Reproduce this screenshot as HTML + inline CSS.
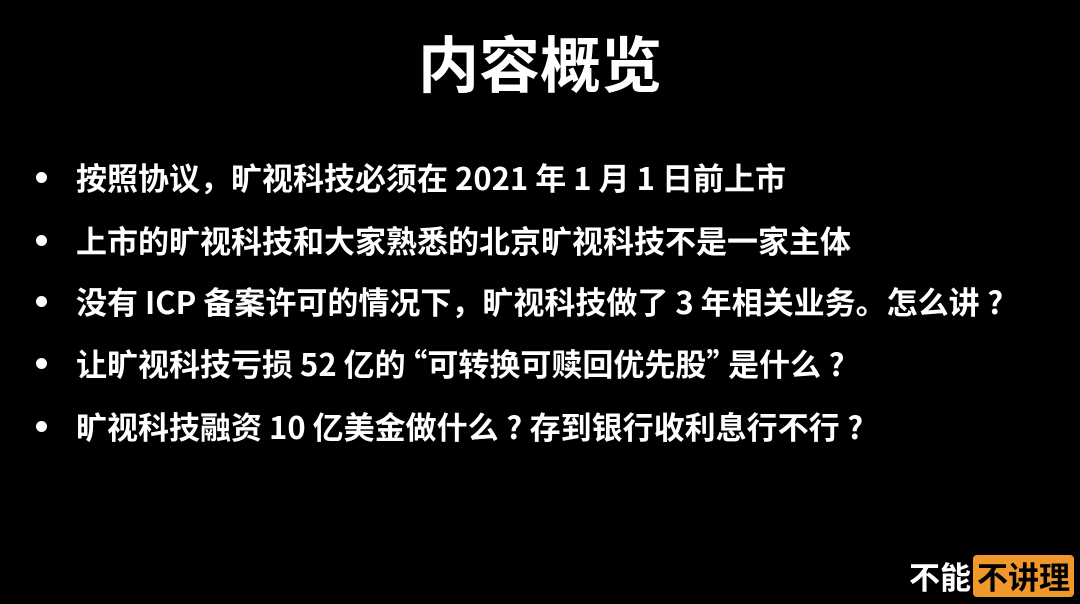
<!DOCTYPE html>
<html lang="zh-CN"><head><meta charset="utf-8"><style>
html,body{margin:0;padding:0;background:#000;}
body{width:1080px;height:604px;position:relative;overflow:hidden;font-family:"Noto Sans CJK SC","Liberation Sans",sans-serif;color:#fff;}
h1{position:absolute;left:0;width:1080px;top:19px;margin:0;text-align:center;font-size:61px;font-weight:bold;line-height:84px;}
.li{position:absolute;left:76px;font-size:31px;font-weight:bold;line-height:40px;white-space:nowrap;}
.li:before{content:"";position:absolute;left:-40px;top:15px;width:11px;height:11px;border-radius:50%;background:#fff;}
.q{display:inline-block;width:1em;text-align:center;}
.lq{margin-left:-0.3em;}
.rq{margin-right:-0.3em;}
.logo{position:absolute;left:909px;top:554px;font-size:31px;font-weight:bold;line-height:44px;white-space:nowrap;}
.logo span{display:inline-block;background:#f0982b;color:#000;border-radius:4px;padding:0 4px;margin-left:2px;line-height:42px;}
</style></head><body>
<h1>内容概览</h1>
<div class="li" style="top:157px">按照协议，旷视科技必须在 2021 年 1 月 1 日前上市</div>
<div class="li" style="top:220px">上市的旷视科技和大家熟悉的北京旷视科技不是一家主体</div>
<div class="li" style="top:281px">没有 ICP 备案许可的情况下，旷视科技做了 3 年相关业务。怎么讲<span class="q">?</span></div>
<div class="li" style="top:343px">让旷视科技亏损 52 亿的<span class="lq">“</span>可转换可赎回优先股<span class="rq">”</span>是什么<span class="q">?</span></div>
<div class="li" style="top:406px">旷视科技融资 10 亿美金做什么<span class="q">?</span>存到银行收利息行不行<span class="q">?</span></div>
<div class="logo">不能<span>不讲理</span></div>
</body></html>
